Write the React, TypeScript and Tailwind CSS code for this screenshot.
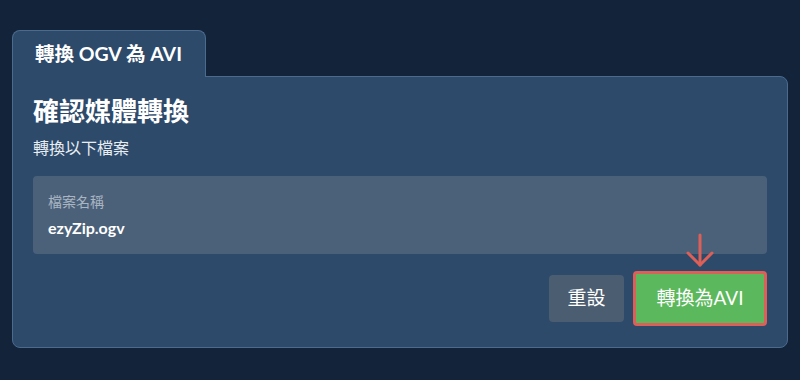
export default function App() {
  return (
    <div
      className="h-[380px] w-[800px] bg-[#12233a] px-[12px] pt-[30px] text-white"
      style={{ fontFamily: 'Lato, "Noto Sans CJK TC", sans-serif' }}
    >
      <div className="relative z-10 -mb-px flex h-[47px] w-[194px] items-center rounded-t-lg border border-b-0 border-[#4b6a8e] bg-[#2d4a6b] pl-[22px]">
        <span className="text-[19.5px] font-bold">轉換 OGV 為 AVI</span>
      </div>
      <div className="h-[272px] rounded-tr-lg rounded-b-lg border border-[#4b6a8e] bg-[#2d4a6b] px-[20px] pt-[19px]">
        <h2 className="text-[26px] font-bold leading-[30px]">確認媒體轉換</h2>
        <p className="mt-[12px] text-[16px] leading-[20px] text-[#e8edf2]">轉換以下檔案</p>
        <div className="mt-[18px] h-[78px] rounded bg-[#4b6179] px-[15px] pt-[17px]">
          <div className="text-[14px] leading-[18px] text-[#a9b5c2]">檔案名稱</div>
          <div className="mt-[7px] text-[16px] font-bold leading-[20px]">ezyZip.ogv</div>
        </div>
        <div className="mt-[17px] flex items-center justify-end gap-[9px]">
          <button className="h-[47px] w-[75px] rounded bg-[#4b5d70] text-[19px] text-white">重設</button>
          <div className="relative">
            <svg
              className="absolute left-[50px] top-[-38px]"
              width="34"
              height="36"
              viewBox="0 0 34 36"
              fill="none"
              stroke="#dc5f58"
              strokeWidth="3"
              strokeLinecap="round"
              strokeLinejoin="round"
            >
              <path d="M17 2 V32" />
              <path d="M5 20 L17 32 L29 20" />
            </svg>
            <button className="h-[55px] w-[134px] rounded border-[3px] border-[#dc5f58] bg-[#5cb85c] text-[19px] text-white">
              轉換為AVI
            </button>
          </div>
        </div>
      </div>
    </div>
  );
}
